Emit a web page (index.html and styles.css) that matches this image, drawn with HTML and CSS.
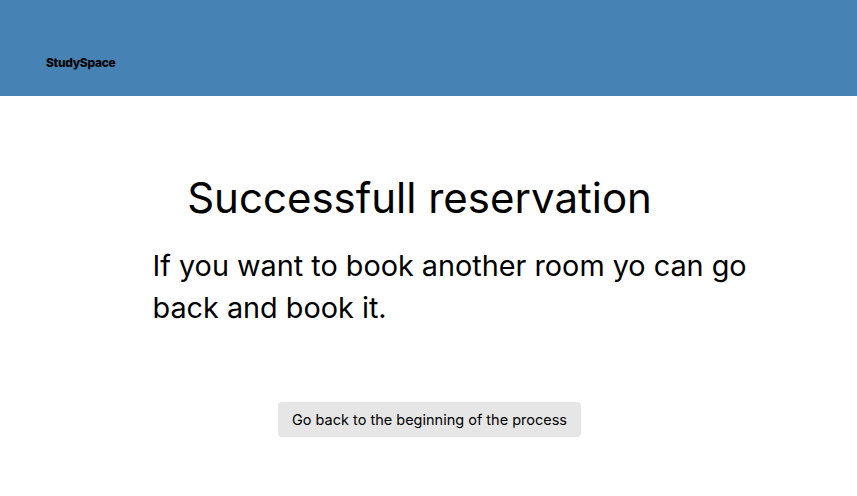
FILE: index.html
```html
<!DOCTYPE html>
<html>
<head>
<meta charset="utf-8">
<link rel="stylesheet" href="styles.css">
</head>
<body>
<header class="header">
  <div class="logo">StudySpace</div>
</header>
<main class="main">
  <h1 class="title">Successfull reservation</h1>
  <p class="text">If you want to book another room yo can go back and book it.</p>
  <div class="actions">
    <button class="btn">Go back to the beginning of the process</button>
  </div>
</main>
</body>
</html>
```
FILE: styles.css
```css
* { box-sizing: border-box; }
body {
  margin: 0;
  font-family: Inter, "Noto Sans", sans-serif;
  color: #000;
  background: #fff;
}
.header {
  background: steelblue;
  height: 96px;
  padding: 55px 0 0 46px;
}
.logo {
  font-weight: 800;
  font-size: 12px;
  line-height: 16px;
  letter-spacing: -0.3px;
}
.main {
  display: flex;
  flex-direction: column;
  align-items: center;
}
.title {
  font-weight: 400;
  font-size: 42px;
  margin: 77px 18px 0 0;
  line-height: 50px;
}
.text {
  font-size: 28.8px;
  line-height: 42px;
  width: 610px;
  margin: 22px 0 0 58px;
}
.actions {
  margin-top: 73px;
  display: flex;
  justify-content: center;
}
.btn {
  font-family: Inter, sans-serif;
  font-size: 14.5px;
  background: #e6e6e6;
  border: none;
  border-radius: 4px;
  height: 35px;
  padding: 0 14px;
  margin-left: 2px;
  color: #000;
}
```
